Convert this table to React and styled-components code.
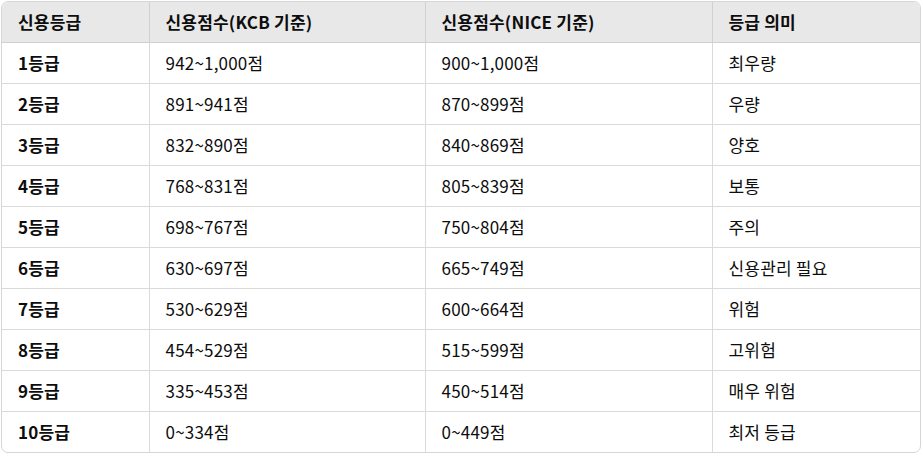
import React from "react";
import styled, { createGlobalStyle } from "styled-components";

const GlobalStyle = createGlobalStyle`
  body {
    margin: 0;
    background: #ffffff;
    font-family: "Noto Sans CJK KR", "Noto Sans", sans-serif;
    color: #0d0d0d;
  }
`;

const Frame = styled.div`
  box-sizing: border-box;
  width: 920px;
  margin: 1px 0 0 1px;
  border: 1px solid #d6d6d6;
  border-radius: 7px;
  overflow: hidden;
`;

const Table = styled.table`
  width: 100%;
  border-collapse: collapse;
  table-layout: fixed;
  font-size: 17px;
  letter-spacing: 0.2px;
`;

const HeadCell = styled.th`
  height: 40px;
  padding: 0 16px;
  background: #e8e8e8;
  text-align: left;
  font-weight: 700;
  line-height: 20px;
  border-bottom: 1px solid #d0d0d0;
  border-right: 1px solid #d0d0d0;
  &:last-child {
    border-right: none;
  }
`;

const Row = styled.tr`
  &:last-child td {
    border-bottom: none;
  }
`;

const Cell = styled.td`
  height: 40px;
  padding: 0 16px;
  line-height: 20px;
  font-weight: ${(p) => (p.$strong ? 700 : 400)};
  border-bottom: 1px solid #dadada;
  border-right: 1px solid #dadada;
  &:last-child {
    border-right: none;
  }
`;

const columns = [
  { label: "신용등급", width: 147 },
  { label: "신용점수(KCB 기준)", width: 276 },
  { label: "신용점수(NICE 기준)", width: 287 },
  { label: "등급 의미" },
];

const grades = [
  ["1등급", "942~1,000점", "900~1,000점", "최우량"],
  ["2등급", "891~941점", "870~899점", "우량"],
  ["3등급", "832~890점", "840~869점", "양호"],
  ["4등급", "768~831점", "805~839점", "보통"],
  ["5등급", "698~767점", "750~804점", "주의"],
  ["6등급", "630~697점", "665~749점", "신용관리 필요"],
  ["7등급", "530~629점", "600~664점", "위험"],
  ["8등급", "454~529점", "515~599점", "고위험"],
  ["9등급", "335~453점", "450~514점", "매우 위험"],
  ["10등급", "0~334점", "0~449점", "최저 등급"],
];

const App = () => {
  return (
    <>
      <GlobalStyle />
      <Frame>
        <Table>
          <colgroup>
            {columns.map((col) => (
              <col key={col.label} style={col.width ? { width: col.width } : undefined} />
            ))}
          </colgroup>
          <thead>
            <tr>
              {columns.map((col) => (
                <HeadCell key={col.label}>{col.label}</HeadCell>
              ))}
            </tr>
          </thead>
          <tbody>
            {grades.map((row) => (
              <Row key={row[0]}>
                {row.map((value, i) => (
                  <Cell key={i} $strong={i === 0}>
                    {value}
                  </Cell>
                ))}
              </Row>
            ))}
          </tbody>
        </Table>
      </Frame>
    </>
  );
};

export default App;
